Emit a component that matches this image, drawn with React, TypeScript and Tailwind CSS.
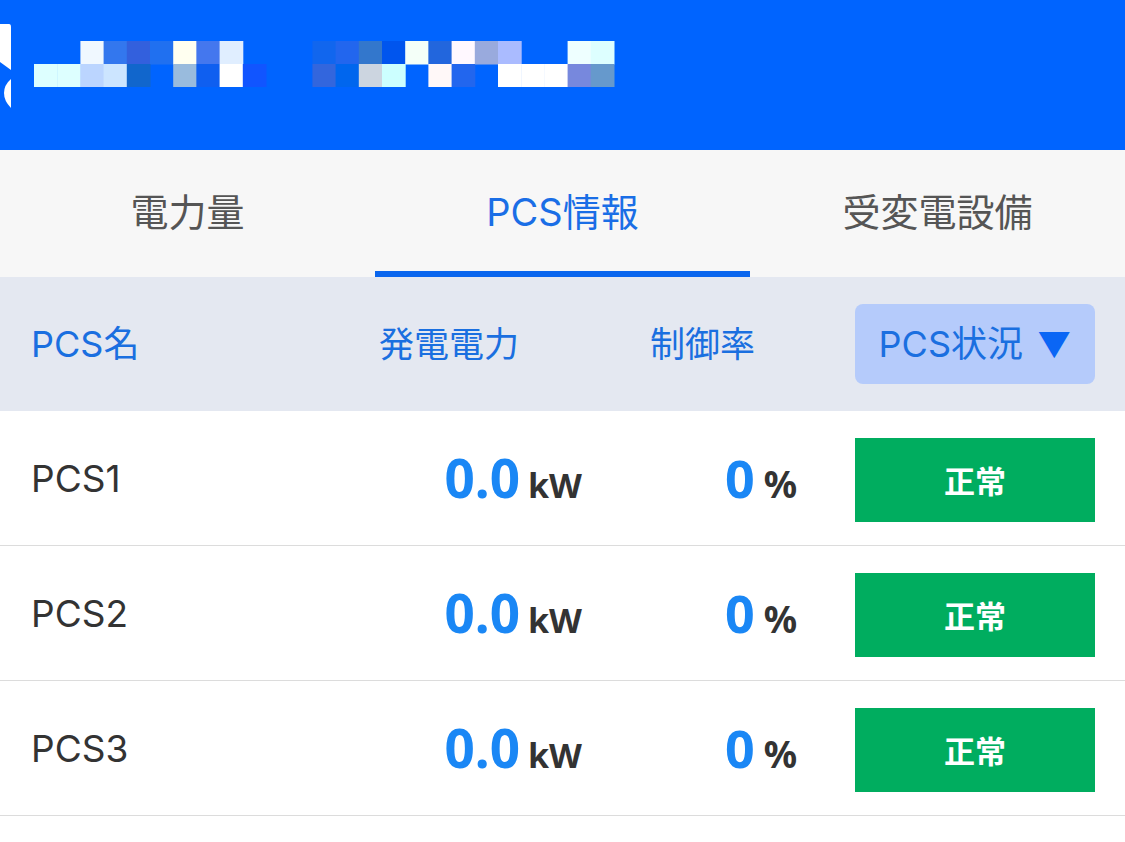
const row1 = [
  '', '', '#f0f8ff', '#3377ee', '#3360dd', '#2070f0', '#fffff0', '#4477ee', '#e0eeff', '', '', '',
  '#1166ee', '#2266ee', '#3377cc', '#0055ee', '#f4fff8', '#2266dd', '#fff8ff', '#99aadd', '#aabbff', '', '', '#eeffff', '#ddffff',
];
const row2 = [
  '#ddffff', '#ddffff', '#bbd5ff', '#cce5ff', '#1166cc', '', '#99bbdd', '#0f5ff0', '#ffffff', '#1155ff', '', '',
  '#3366dd', '#0066ee', '#ccd5e0', '#ccffff', '', '#fff8f8', '#2266ee', '', '#ffffff', '#ffffff', '#ffffff', '#7788dd', '#6699cc',
];

const rows = ['PCS1', 'PCS2', 'PCS3'];

function Mosaic() {
  return (
    <svg width="640" height="120" viewBox="0 0 640 120" className="absolute left-0 top-0">
      <path d="M0 24 H9 Q11 24 11 27 V70 L0 62 Z" fill="#fff" />
      <path d="M11 79 Q4 85 4 93 Q4 101 11 108 Z" fill="#fff" />
      {row1.map((c, i) => (c ? <rect key={'a' + i} x={34 + i * 23.2} y={41} width={23.7} height={23.5} fill={c} /> : null))}
      {row2.map((c, i) => (c ? <rect key={'b' + i} x={34 + i * 23.2} y={64} width={23.7} height={23} fill={c} /> : null))}
    </svg>
  );
}

export default function App() {
  return (
    <div className="w-[1125px] h-[842px] overflow-hidden bg-white font-['Inter','Noto_Sans_CJK_JP',sans-serif]">
      {/* header */}
      <div className="relative h-[150px] bg-[#0064ff]">
        <Mosaic />
      </div>

      {/* tabs */}
      <div className="flex h-[127px] bg-[#f7f7f7]">
        <div className="flex-1 flex items-center justify-center pb-[2px] text-[38px] text-[#555555]">電力量</div>
        <div className="flex-1 flex flex-col">
          <div className="flex-1 flex items-center justify-center pt-[4px] text-[38px] text-[#1a6ee6]">PCS情報</div>
          <div className="h-[6px] bg-[#0a66ee]" />
        </div>
        <div className="flex-1 flex items-center justify-center pb-[2px] text-[38px] text-[#555555]">受変電設備</div>
      </div>

      {/* table header */}
      <div className="flex items-center h-[134px] bg-[#e4e8f1] pl-[31px] pr-[30px] text-[35px] text-[#1a6fe0]">
        <div className="w-[290px] text-[36px]">PCS名</div>
        <div className="w-[261px] pl-[58px]">発電電力</div>
        <div className="w-[215px] pl-[68px]">制御率</div>
        <div className="ml-[58px] w-[240px] h-[80px] rounded-lg bg-[#b5cbfb] flex items-center justify-center gap-[14px] text-[36px]">
          <span>PCS状況</span>
          <span className="text-[#0a66f5] text-[34px]">▼</span>
        </div>
      </div>

      {/* rows */}
      {rows.map((name) => (
        <div key={name} className="flex items-center h-[135px] border-b border-[#dcdcdc] pl-[31px] pr-[30px]">
          <div className="w-[290px] pt-[2px] text-[37px] text-[#333333]">{name}</div>
          <div className="w-[261px] flex items-baseline justify-end gap-[8px] font-['Noto_Sans',sans-serif] font-bold">
            <span className="text-[53px] text-[#1a87f5]">0.0</span>
            <span className="text-[34px] text-[#333333]">kW</span>
          </div>
          <div className="w-[215px] flex items-baseline justify-end gap-[9px] font-['Noto_Sans',sans-serif] font-bold">
            <span className="text-[52px] text-[#1a87f5]">0</span>
            <span className="text-[37px] text-[#333333]">%</span>
          </div>
          <div className="ml-[58px] mt-[4px] w-[240px] h-[84px] bg-[#00ad5f] flex items-center justify-center text-white text-[31px] font-bold font-['Noto_Sans_CJK_JP',sans-serif]">
            正常
          </div>
        </div>
      ))}
      <div className="h-[40px] bg-white" />
    </div>
  );
}
